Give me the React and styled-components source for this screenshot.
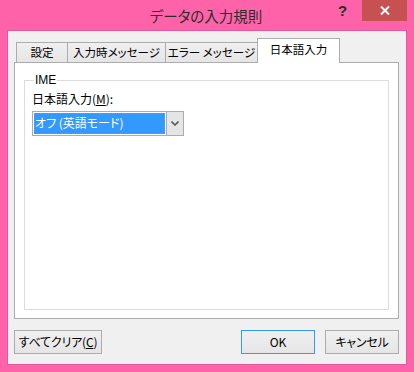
import styled, { createGlobalStyle } from 'styled-components'

const Global = createGlobalStyle`
  html, body { margin: 0; padding: 0; background: #fff; }
  body {
    font-family: "Noto Sans CJK JP", "Liberation Sans", sans-serif;
    font-feature-settings: "palt";
  }
`

const Window = styled.div`
  width: 414px;
  height: 372px;
  box-sizing: border-box;
  background: #fe63a9;
  padding: 0 8px 8px 8px;
  display: flex;
  flex-direction: column;
`

const TitleBar = styled.div`
  height: 31px;
  display: flex;
  align-items: flex-start;
`

const Title = styled.div`
  flex: 1;
  text-align: center;
  font-size: 14.5px;
  line-height: 31px;
  color: #2b2b2b;
  padding-left: 66px;
`

const Help = styled.div`
  width: 14px;
  font: bold 15px/22px "Liberation Sans", sans-serif;
  color: #2a2a2a;
  margin-right: 10px;
`

const Close = styled.div`
  width: 45px;
  height: 21px;
  background: #c75050;
  display: flex;
  align-items: center;
  justify-content: center;
  margin-right: -1px;
`

const Client = styled.div`
  flex: 1;
  background: #f0f0f0;
  box-shadow: 0 0 0 1px #e6589c;
  padding: 8px 7px 10px 6px;
  display: flex;
  flex-direction: column;
`

const TabRow = styled.div`
  display: flex;
  align-items: flex-end;
  height: 24px;
  padding-left: 2px;
  position: relative;
  z-index: 1;
  margin-bottom: -1px;
`

const Tab = styled.div`
  box-sizing: border-box;
  width: ${p => p.$w}px;
  height: ${p => (p.$active ? 25 : 21)}px;
  margin-left: ${p => (p.$first ? 0 : -1)}px;
  border: 1px solid #acacac;
  border-bottom: ${p => (p.$active ? 'none' : '1px solid #acacac')};
  background: ${p => (p.$active ? '#fff' : 'linear-gradient(#f0f0f0, #e5e5e5)')};
  font-size: 11.5px;
  line-height: ${p => (p.$active ? 21 : 19)}px;
  color: #000;
  text-align: center;
  white-space: nowrap;
  overflow: hidden;
  position: relative;
  z-index: ${p => (p.$active ? 2 : 1)};
`

const Panel = styled.div`
  height: 257px;
  box-sizing: border-box;
  background: #fff;
  border: 1px solid #acacac;
  padding: 10px 9px 8px 9px;
  display: flex;
`

const Group = styled.fieldset`
  flex: 1;
  margin: 0;
  border: 1px solid #dcdcdc;
  padding: 4px 8px 0 7px;
  min-width: 0;
`

const Legend = styled.legend`
  font-family: "Liberation Sans", "Noto Sans CJK JP", sans-serif;
  font-size: 12px;
  line-height: 14px;
  padding: 0 1px;
  margin-left: 2px;
  color: #000;
`

const Label = styled.div`
  font-size: 12px;
  line-height: 16px;
  color: #000;
  margin-bottom: 4px;
  u { text-decoration: underline; }
`

const Combo = styled.div`
  width: 152px;
  height: 25px;
  box-sizing: border-box;
  border: 1px solid #acacac;
  background: #fff;
  display: flex;
`

const ComboValue = styled.div`
  flex: 1;
  margin: 1px;
  background: #3399ff;
  outline: 1px dotted #e67e22;
  outline-offset: -1px;
  color: #fff;
  font-size: 12px;
  line-height: 20px;
  padding-left: 1px;
  white-space: pre;
`

const DropBtn = styled.div`
  width: 16px;
  background: #e5e5e5;
  border-left: 1px solid #acacac;
  display: flex;
  align-items: center;
  justify-content: center;
`

const ButtonRow = styled.div`
  display: flex;
  margin-top: 11px;
`

const Button = styled.div`
  box-sizing: border-box;
  width: ${p => p.$w}px;
  height: 24px;
  margin-left: ${p => p.$ml || 0}px;
  border: 1px solid ${p => (p.$default ? '#3399ff' : '#acacac')};
  background: linear-gradient(#f0f0f0, #e5e5e5);
  font-size: 12px;
  letter-spacing: -0.2px;
  line-height: 22px;
  text-align: center;
  white-space: nowrap;
  color: #000;
  u { text-decoration: underline; }
`

export default function App() {
  return (
    <>
      <Global />
      <Window>
        <TitleBar>
          <Title>データの入力規則</Title>
          <Help>?</Help>
          <Close>
            <svg width="10" height="9" viewBox="0 0 10 9">
              <path d="M1 0.5 L9 8.5 M9 0.5 L1 8.5" stroke="#fff" strokeWidth="2" />
            </svg>
          </Close>
        </TitleBar>
        <Client>
          <TabRow>
            <Tab $w={52} $first>設定</Tab>
            <Tab $w={99}>入力時メッセージ</Tab>
            <Tab $w={93}>エラー メッセージ</Tab>
            <Tab $w={83} $active>日本語入力</Tab>
          </TabRow>
          <Panel>
            <Group>
              <Legend>IME</Legend>
              <Label>日本語入力(<u>M</u>):</Label>
              <Combo>
                <ComboValue>オフ (英語モード)</ComboValue>
                <DropBtn>
                  <svg width="8" height="5" viewBox="0 0 8 5">
                    <path d="M0.5 0.5 L4 4 L7.5 0.5" stroke="#5a5a5a" strokeWidth="1.6" fill="none" />
                  </svg>
                </DropBtn>
              </Combo>
            </Group>
          </Panel>
          <ButtonRow>
            <Button $w={88} $ml={0}>すべてクリア(<u>C</u>)</Button>
            <Button $w={74} $ml={139} $default>OK</Button>
            <Button $w={74} $ml={10}>キャンセル</Button>
          </ButtonRow>
        </Client>
      </Window>
    </>
  )
}
